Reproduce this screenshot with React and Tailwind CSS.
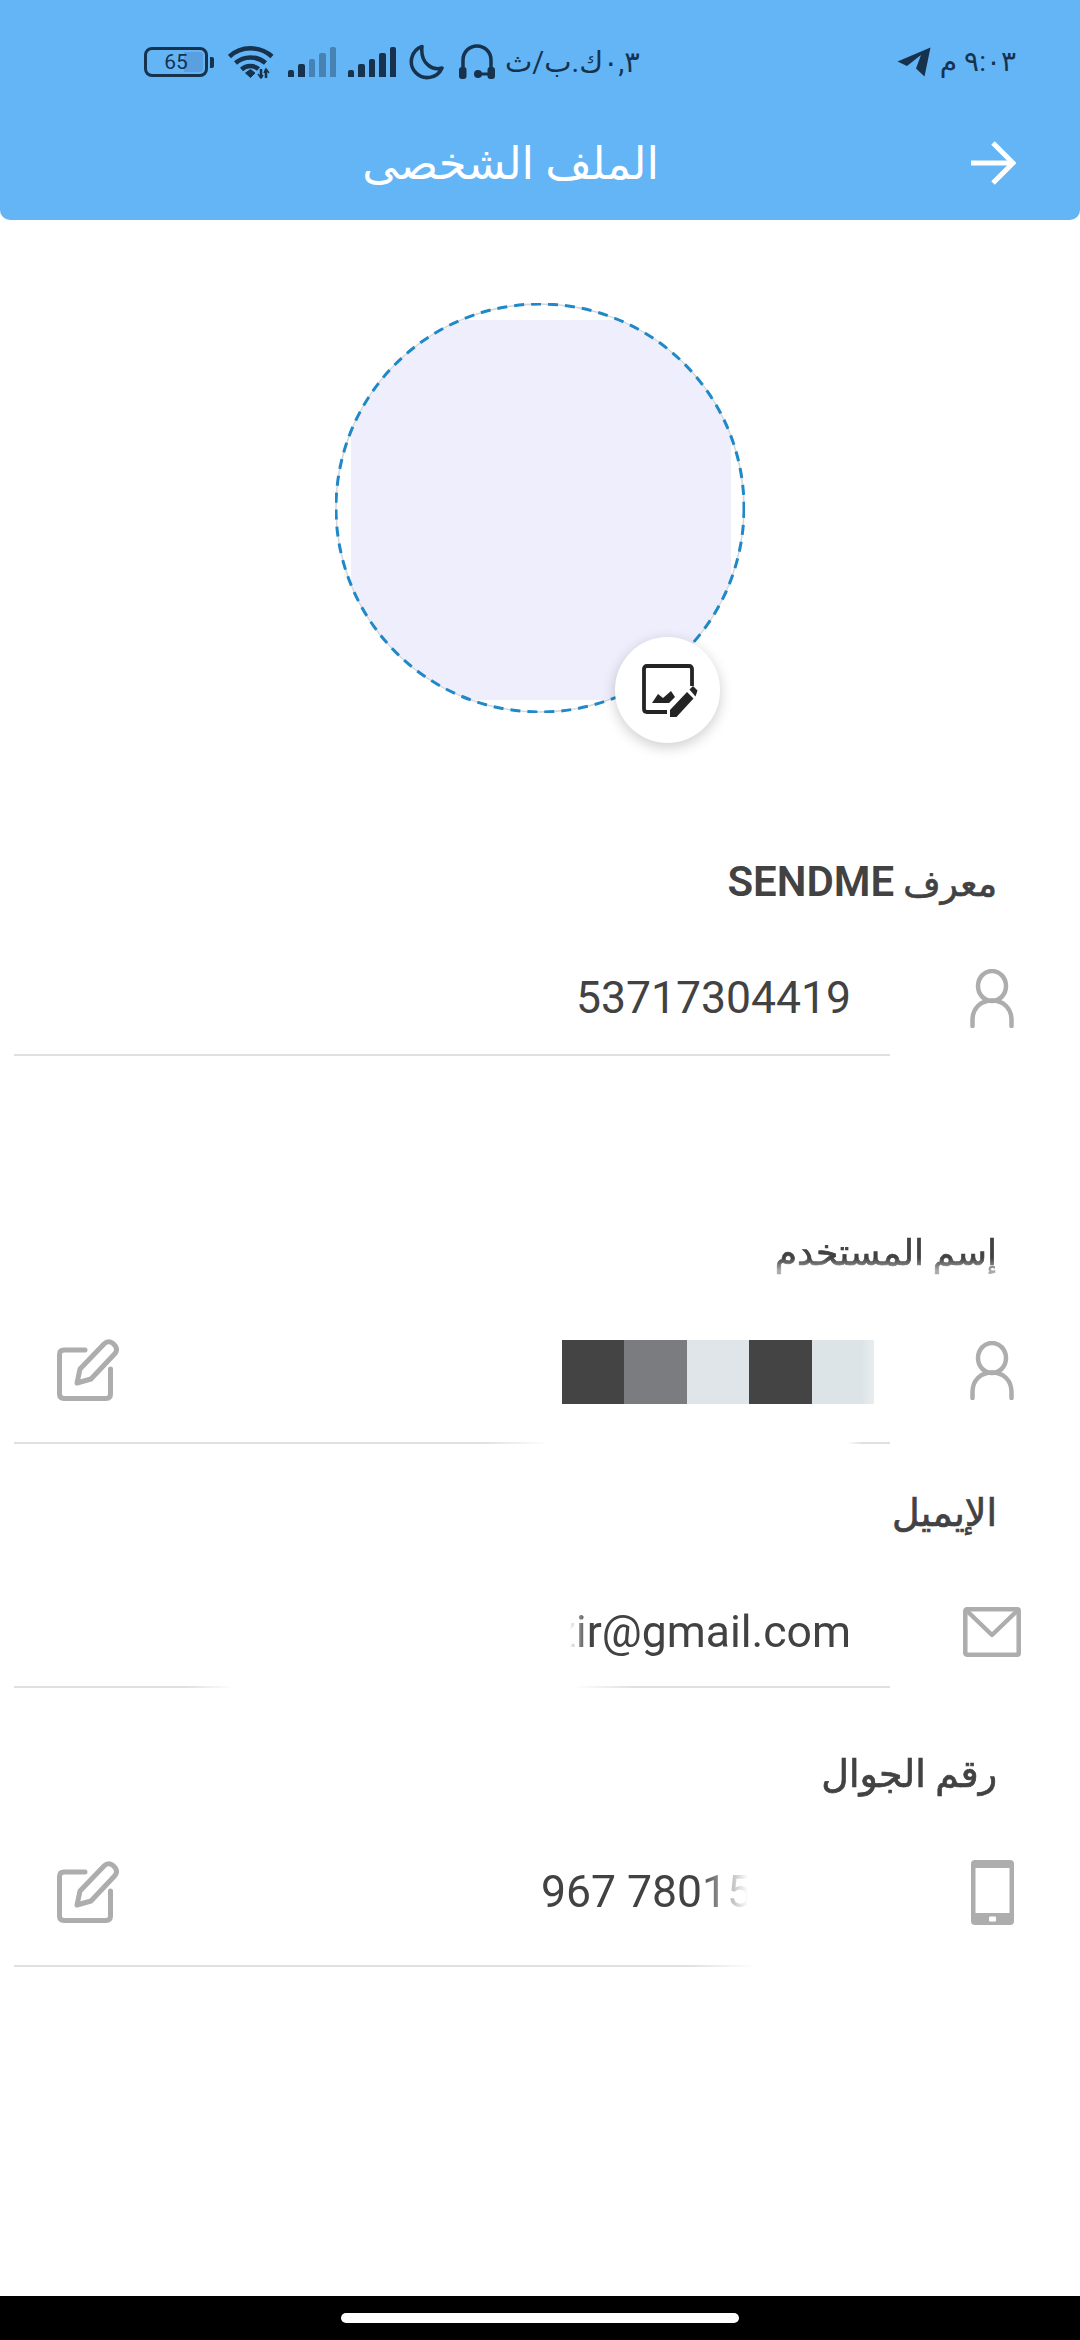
import React from 'react';

const FONT = 'font-["Roboto","DejaVu_Sans",sans-serif]';
const ARABIC_BOLD = '[-webkit-text-stroke:0.7px_#424242]';

function SignalBars({ dimFrom = 5 }) {
    const heights = ['h-[7px]', 'h-[13px]', 'h-[18px]', 'h-[24px]', 'h-[30px]'];
    return (
        <div className="flex items-end gap-[4px] h-[30px]">
            {heights.map((h, i) => (
                <div key={i} className={`w-[6.4px] rounded-t-[2px] ${h} ${i >= dimFrom ? 'bg-[#4682B4]' : 'bg-[#17324D]'}`} />
            ))}
        </div>
    );
}

function Battery() {
    return (
        <div className="flex items-center gap-[2px]">
            <div className="relative w-[64px] h-[30px] border-[3px] border-[#17324D] rounded-[8px] flex items-center justify-center">
                <div className="absolute left-[2px] top-[2px] bottom-[2px] right-[2px] rounded-[3px] bg-[linear-gradient(to_right,transparent_65%,#5AA0E0_65%)]" />
                <span className="relative text-[21px] leading-none text-[#17324D]">65</span>
            </div>
            <div className="w-[4px] h-[11px] rounded-r-[2px] bg-[#17324D]" />
        </div>
    );
}

function WifiIcon() {
    return (
        <svg width="46" height="34" viewBox="0 0 46 34" fill="none" stroke="#17324D" strokeWidth="4.5">
            <path d="M1.5 11.5C13 0.5 32 0.5 44 11.5" />
            <path d="M7.5 18C16 10.5 29 10.5 37.5 18" />
            <path d="M13.5 24.5C18.5 20 26 20 30.5 24" />
            <path d="M17.5 28L22.500 24.500L27 28L22.500 32.500Z" fill="#17324D" strokeWidth="1" />
            <path d="M33 24V33M38 33V24" strokeWidth="2.500" />
            <path d="M30 29L33 33L35 30M36 28L38 24L41 28" strokeWidth="1.500" />
        </svg>
    );
}

function MoonIcon() {
    return (
        <svg width="36" height="36" viewBox="0 0 36 36" fill="none" stroke="#17324D" strokeWidth="3.5" strokeLinejoin="round">
            <path d="M13 2.500A16 16 0 1 0 33 24C24 27 11 20 13 2.500Z" />
        </svg>
    );
}

function HeadsetIcon() {
    return (
        <svg width="38" height="36" viewBox="0 0 38 36" fill="none" stroke="#17324D" strokeWidth="3.500">
            <path d="M5 27V16A14 14 0 0 1 33 16V27" />
            <rect x="1" y="23" width="7.500" height="12" rx="3" fill="#17324D" stroke="none" />
            <rect x="29.500" y="23" width="7.500" height="12" rx="3" fill="#17324D" stroke="none" />
            <circle cx="20" cy="30" r="4" fill="#17324D" stroke="none" />
            <path d="M22 30H32" strokeWidth="3" />
        </svg>
    );
}

function TelegramIcon() {
    return (
        <svg width="34" height="30" viewBox="0 0 34 30">
            <path d="M0.500 14.500L33.500 0.500L27.500 29.500L19 21.500L24 8L10 19Z" fill="#17324D" />
        </svg>
    );
}

function BackArrow() {
    return (
        <svg width="46" height="44" viewBox="0 0 46 44" fill="none" stroke="#ffffff" strokeWidth="5">
            <path d="M1 22H43" />
            <path d="M23 2L43 22L23 42" />
        </svg>
    );
}

function PersonIcon() {
    return (
        <svg width="44" height="59" viewBox="0 0 44 59" fill="none" stroke="#ADADAD" strokeWidth="4.500" strokeLinecap="round">
            <ellipse cx="22" cy="17" rx="14" ry="15" />
            <path d="M2.500 57V51C2.500 39 11 31.500 22 31.500C33 31.500 41.500 39 41.500 51V57" />
        </svg>
    );
}

function MailIcon() {
    return (
        <svg width="58" height="50" viewBox="0 0 58 50" fill="none" stroke="#ADADAD" strokeWidth="4.500" strokeLinejoin="round">
            <rect x="2.300" y="2.300" width="53.400" height="45.400" rx="1.500" />
            <path d="M3 3L29 28L55 3" />
        </svg>
    );
}

function PhoneIcon() {
    return (
        <svg width="43" height="65" viewBox="0 0 43 65">
            <rect x="0" y="0" width="43" height="65" rx="4" fill="#ADADAD" />
            <rect x="4.500" y="8" width="34" height="45" fill="#ffffff" />
            <rect x="18" y="56.500" width="7" height="5" rx="1" fill="#ffffff" />
        </svg>
    );
}

function EditIcon() {
    return (
        <svg width="62" height="62" viewBox="0 0 62 62" fill="none" stroke="#ADADAD" strokeWidth="5" strokeLinejoin="round" strokeLinecap="round">
            <path d="M28 11H7Q2.500 11 2.500 15.500V55Q2.500 59.500 7 59.500H49Q53.500 59.500 53.500 55V30" />
            <path d="M20 44L23 30L47 5Q51 1 55.500 4L58 6.500Q61 10.500 58 14.500L34 40Z" />
        </svg>
    );
}

function ImageEditIcon() {
    return (
        <svg width="56" height="54" viewBox="0 0 56 54" fill="none">
            <path d="M50 22V5Q50 2 47 2H5Q2 2 2 5V45Q2 48 5 48H25" stroke="#242424" strokeWidth="3.800" />
            <path d="M10 39L16 30L21 34L29 27L33 33L27 39Z" fill="#242424" />
            <path d="M28 53V46L45 28L51.500 34.500L34.500 53Z" fill="#242424" />
            <path d="M47.500 25.500L51 22L55.500 26.500L53.500 32.500Z" fill="#242424" />
        </svg>
    );
}

function Field({ label, labelClass, outerClass, rowClass, lineClass, children, edit, icon }) {
    return (
        <div className={outerClass}>
            <div
                dir="rtl"
                className={`h-[50px] pr-[83px] leading-[50px] text-[#424242] whitespace-nowrap ${labelClass}`}
            >
                {label}
            </div>
            <div className={`flex items-center ${rowClass}`}>
                {edit && <div className="ml-[57px]"><EditIcon /></div>}
                <div className="ml-auto">{children}</div>
                <div className="w-[58px] mr-[59px] flex justify-center">{icon}</div>
            </div>
            <div className={`ml-[14px] w-[876px] h-[2px] ${lineClass}`} />
        </div>
    );
}

export default function App() {
    return (
        <div className={`w-full h-[2340px] flex flex-col bg-white overflow-hidden ${FONT}`}>
            <header className="h-[220px] shrink-0 bg-[#64B5F6] rounded-b-[10px] text-[#17324D] pt-[44px]">
                <div className="flex items-center justify-between h-[36px] pl-[144px] pr-[64px]">
                    <div className="flex items-center">
                        <Battery />
                        <div className="ml-[14px]"><WifiIcon /></div>
                        <div className="ml-[14px]"><SignalBars dimFrom={2} /></div>
                        <div className="ml-[12px]"><SignalBars /></div>
                        <div className="ml-[13px]"><MoonIcon /></div>
                        <div className="ml-[13px]"><HeadsetIcon /></div>
                        <span dir="rtl" className="ml-[8px] w-[136px] text-[29px] leading-none whitespace-nowrap">٠,٣ك.ب/ث</span>
                    </div>
                    <div className="flex items-center gap-[9px]">
                        <TelegramIcon />
                        <span dir="rtl" className="text-[28px] leading-none whitespace-nowrap">٩:٠٣ م</span>
                    </div>
                </div>
                <div className="flex items-center justify-end h-[80px] mt-[43px] pr-[64px] text-white">
                    <h1 dir="rtl" className="text-[45px] leading-none font-normal whitespace-nowrap">الملف الشخصى</h1>
                    <div className="ml-[311px]"><BackArrow /></div>
                </div>
            </header>

            <main className="flex-1 min-h-0">
                {/* avatar */}
                <div className="relative w-[410px] h-[410px] mt-[83px] ml-[335px]">
                    <div className="absolute inset-[2px] rounded-full overflow-hidden flex items-center justify-center">
                        <div className="w-[380px] h-[380px] shrink-0 bg-[#EEEEFC] translate-x-[1px] translate-y-[2px]" />
                    </div>
                    <svg className="absolute inset-0" width="410" height="410" viewBox="0 0 410 410" fill="none">
                        <circle cx="205" cy="205" r="204" stroke="#D6D6D6" strokeWidth="1.500" />
                        <circle cx="205" cy="205" r="204" stroke="#1E88C8" strokeWidth="3" strokeDasharray="10 7" />
                    </svg>
                    <div className="absolute left-[280px] top-[334px] w-[105px] h-[106px] rounded-full bg-white shadow-[0_4px_14px_rgba(0,0,0,0.2)] flex items-center justify-center">
                        <div className="ml-[4px] mt-[1px]"><ImageEditIcon /></div>
                    </div>
                </div>

                <Field
                    label={<><span className={ARABIC_BOLD}>معرف</span> <span className="text-[42px] font-semibold">SENDME</span></>}
                    labelClass="text-[36px]"
                    outerClass="mt-[144px]"
                    rowClass="h-[60px] mt-[61px] mb-[26px]"
                    lineClass="bg-[#E0E0E0]"
                    icon={<PersonIcon />}
                >
                    <span className="block mr-[112px] text-[44.5px] leading-none text-[#424242]">53717304419</span>
                </Field>

                <Field
                    label="إسم المستخدم"
                    labelClass={`text-[36px] ${ARABIC_BOLD} [mask-image:linear-gradient(to_bottom,black_60%,rgba(0,0,0,0.45)_85%)]`}
                    outerClass="mt-[172px]"
                    rowClass="h-[60px] mt-[62px] mb-[42px]"
                    lineClass="bg-[linear-gradient(to_right,#e0e0e0_468px,transparent_536px,transparent_833px,#e0e0e0_848px)]"
                    edit
                    icon={<PersonIcon />}
                >
                    <div className="flex mr-[89px] translate-y-[2px]">
                        <div className="w-[62px] h-[64px] bg-[#444444]" />
                        <div className="w-[63px] h-[64px] bg-[#7B7C80]" />
                        <div className="w-[62px] h-[64px] bg-[#E0E5E9]" />
                        <div className="w-[63px] h-[64px] bg-[#444444]" />
                        <div className="w-[62px] h-[64px] bg-[linear-gradient(to_right,#DDE4E7_80%,#E9EDEF)]" />
                    </div>
                </Field>

                <Field
                    label="الإيميل"
                    labelClass={`text-[38px] ${ARABIC_BOLD}`}
                    outerClass="mt-[44px]"
                    rowClass="h-[60px] mt-[64px] mb-[24px]"
                    lineClass="bg-[linear-gradient(to_right,#e0e0e0_172px,transparent_220px,transparent_558px,#e0e0e0_620px)]"
                    icon={<MailIcon />}
                >
                    <div className="mr-[112px] [mask-image:linear-gradient(to_right,transparent_16px,black_32px)]">
                        <span className="text-[44.5px] leading-[60px] text-[#424242] whitespace-nowrap">zir@gmail.com</span>
                    </div>
                </Field>

                <Field
                    label="رقم الجوال"
                    labelClass={`text-[38px] ${ARABIC_BOLD} [mask-image:linear-gradient(to_right,rgba(0,0,0,0.6)_0px,black_40px)]`}
                    outerClass="mt-[61px]"
                    rowClass="h-[60px] mt-[63px] mb-[43px]"
                    lineClass="bg-[linear-gradient(to_right,#e0e0e0_675px,transparent_743px)]"
                    edit
                    icon={<PhoneIcon />}
                >
                    <div className="mr-[211px] [mask-image:linear-gradient(to_left,transparent_4px,black_52px)]">
                        <span className="text-[44.5px] leading-[60px] text-[#424242] whitespace-nowrap">967 78015</span>
                    </div>
                </Field>
            </main>

            <div className="h-[44px] shrink-0 bg-black flex justify-center pt-[17px]">
                <div className="w-[398px] h-[10px] rounded-full bg-white" />
            </div>
        </div>
    );
}
